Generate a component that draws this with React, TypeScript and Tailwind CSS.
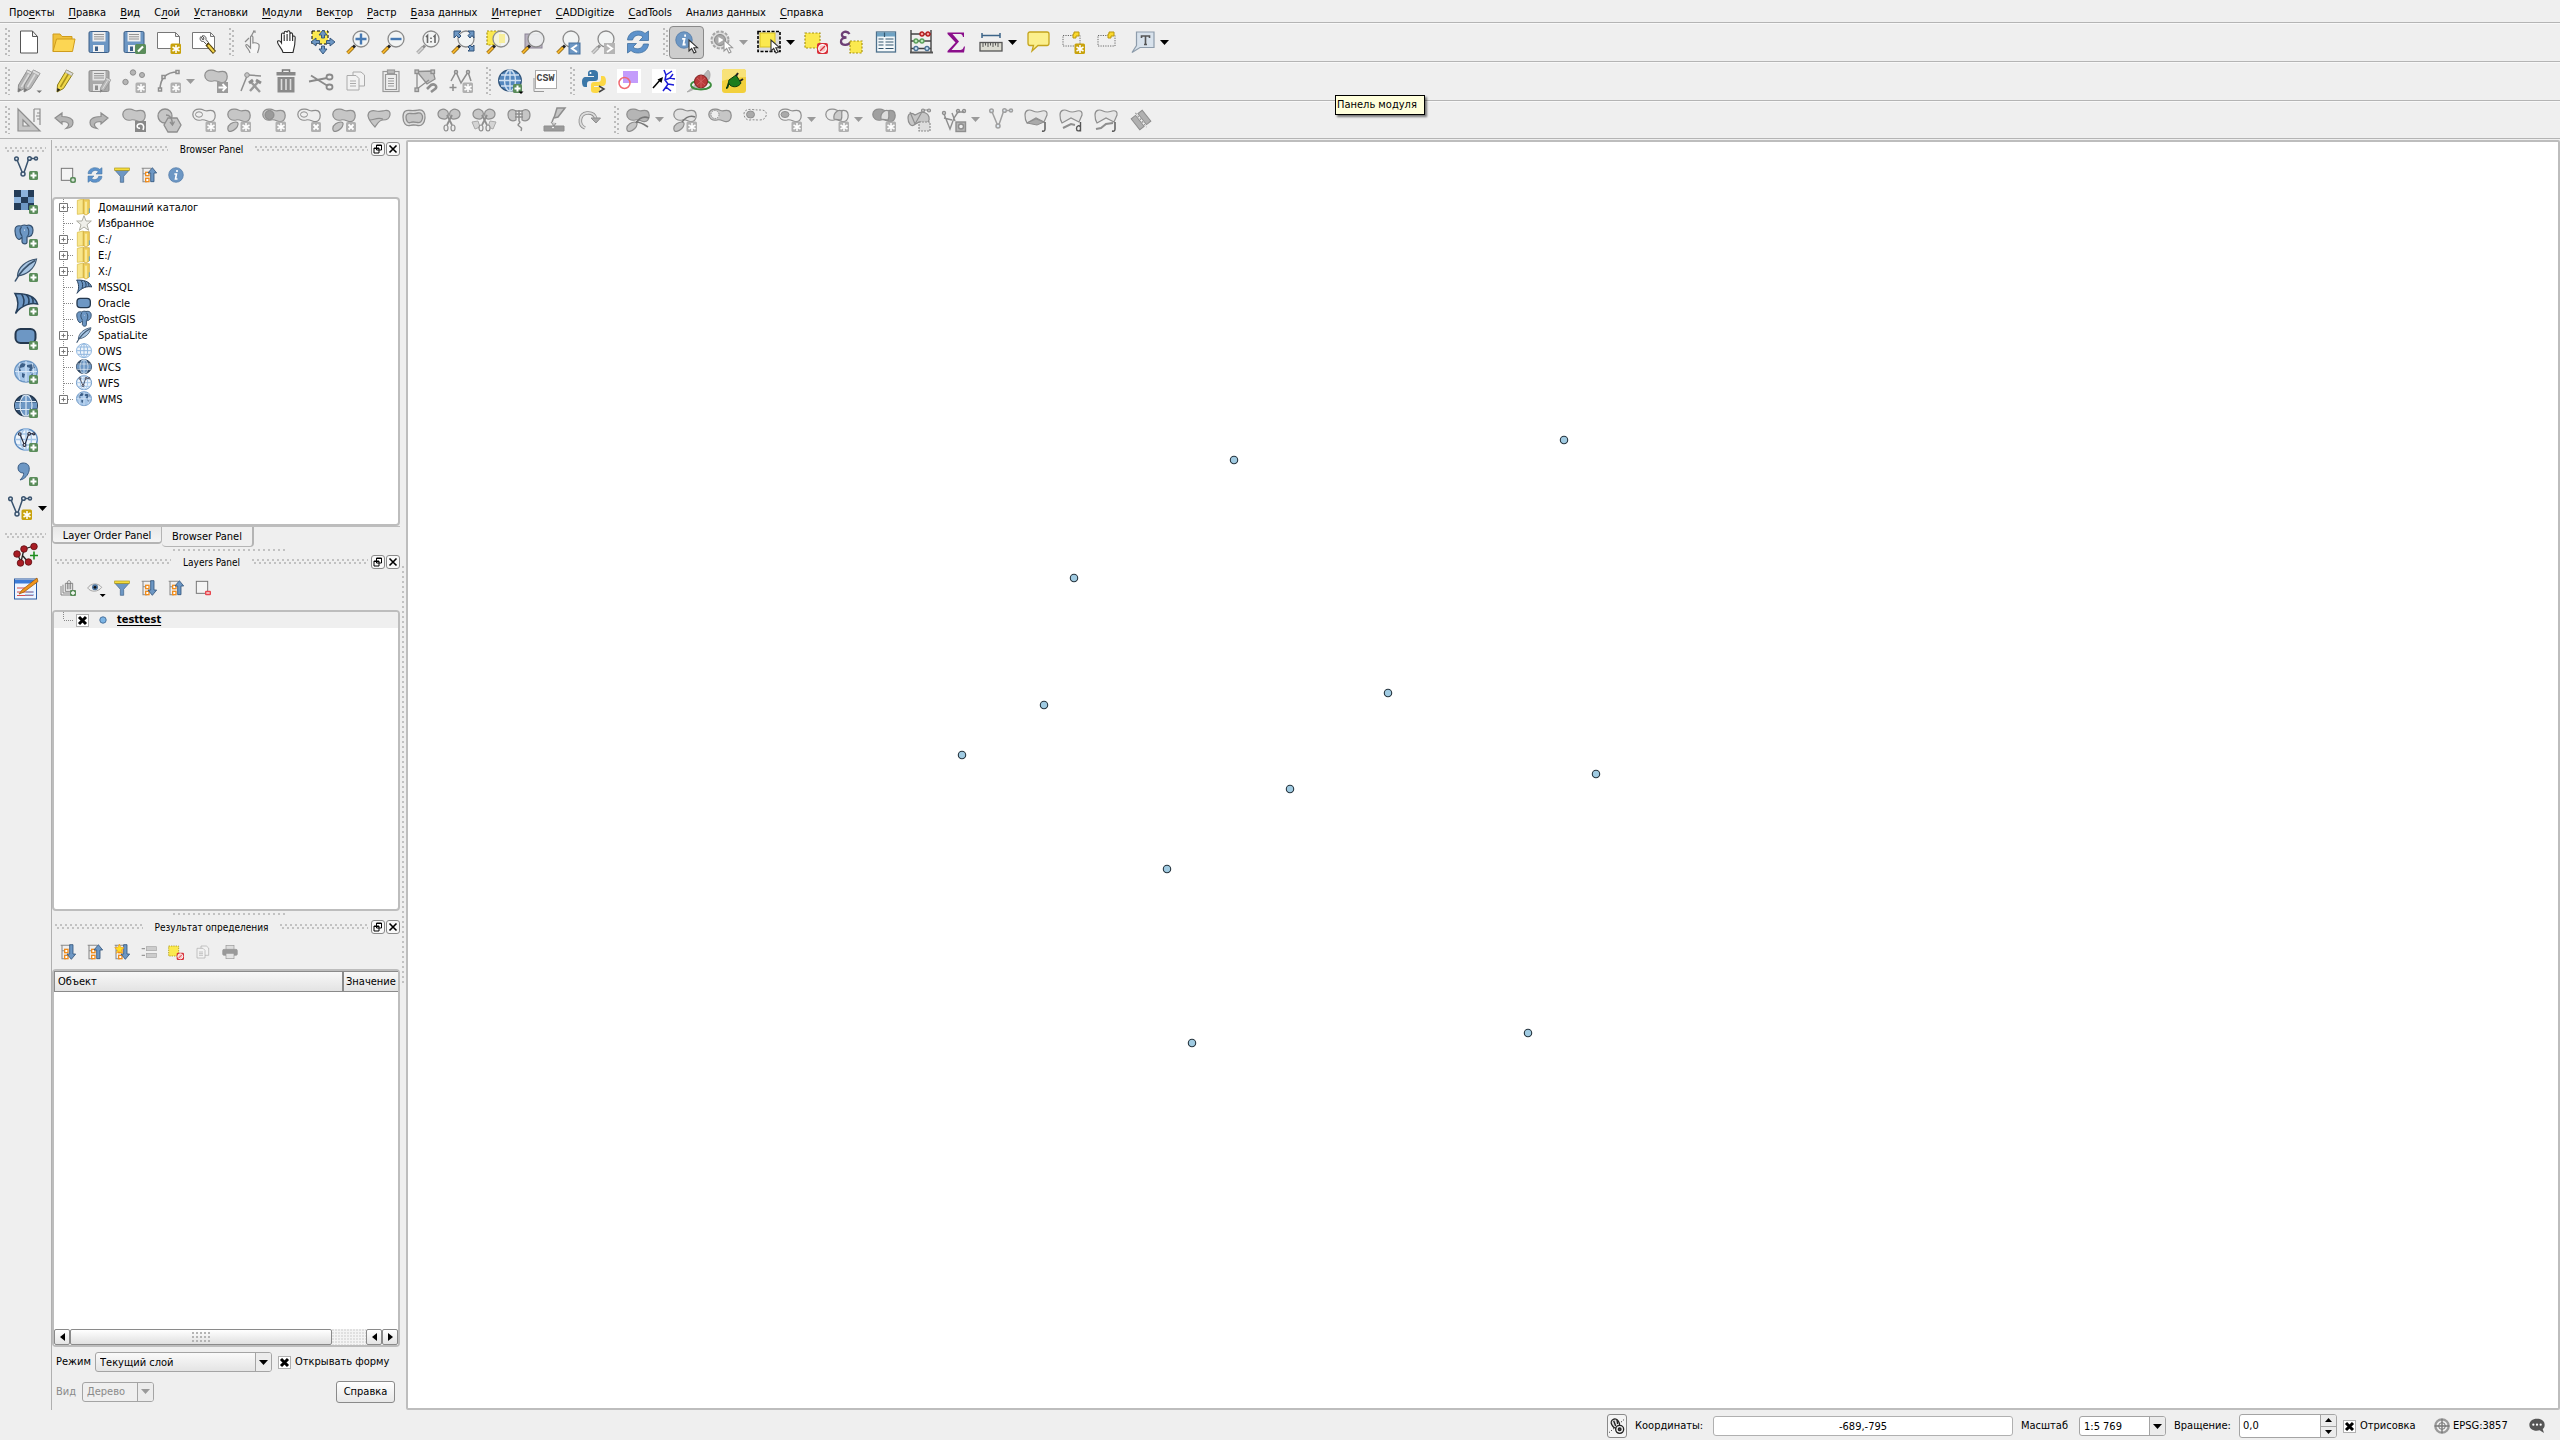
import type { ReactNode } from 'react'

const GRAY = '#8e8e8e'
const LIGHT = '#c6c6c6'
const BLUE = '#6d97c4'
const NAVY = '#3a536e'

/* ---------- icon parts, all drawn on a 24x24 grid ---------- */

const Plus = () => (
  <g>
    <rect x="15" y="15" width="9" height="9" rx="1.5" fill="#5a8c5a" />
    <path d="M19.5 16.5v6M16.5 19.5h6" stroke="#fff" strokeWidth="2" />
  </g>
)

const Star = ({ color = '#c8a20c' }: { color?: string }) => (
  <g>
    <rect x="13.5" y="13.5" width="10.500" height="10.500" rx="1.5" fill={color} stroke="none" />
    <path d="M19 15v8M15.500 17l7 4M22.500 17l-7 4" stroke="#fff" strokeWidth="1.5" />
  </g>
)

const GrayStar = () => <Star color="#b0b0b0" />

const Cross = () => (
  <g>
    <rect x="14" y="14" width="10" height="10" rx="1.5" fill="#b0b0b0" />
    <path d="M16.5 16.5l5 5M21.5 16.5l-5 5" stroke="#fff" strokeWidth="1.8" />
  </g>
)

const NoEntry = () => (
  <g>
    <rect x="13" y="13" width="11" height="11" rx="2" fill="#d8303a" />
    <circle cx="18.5" cy="18.5" r="3.8" fill="#f6c6c6" stroke="#fff" strokeWidth="1.3" />
    <path d="M16 21l5-5" stroke="#d8303a" strokeWidth="1.3" />
  </g>
)

const Blob = ({ fill = LIGHT }: { fill?: string }) => (
  <path
    d="M.8 6.5C.8 2.5 4 .8 8 1.2c4 .4 5 2.200 8 1.500 4-1 7 0 7.200 4.500.2 4-2 7.300-6.200 6.300-3-.9-5-2.500-8-1.500-4.500 1-8.200-1.500-8.200-5.500z"
    fill={fill}
    stroke={GRAY}
    strokeWidth="1.2"
  />
)

const Hole = () => <ellipse cx="7" cy="6.5" rx="3.5" ry="2.7" fill="#efefef" stroke={GRAY} />

const Petal = () => (
  <path d="M.8 20.5c0-4 5-6.500 8-6.500 3.500 0 2.500 4 0 6.500s-8 5-8 0z" fill={LIGHT} stroke={GRAY} strokeWidth="1.2" />
)

const Lens = ({ gray = false, children }: { gray?: boolean; children?: ReactNode }) => (
  <g>
    <path d="M9 15.5L6.5 18" stroke={gray ? GRAY : '#222'} strokeWidth="3" />
    <path d="M7 17.5L1.5 23" stroke={gray ? '#9a9a9a' : '#8a6414'} strokeWidth="3.6" />
    <path d="M7 17.5L1.5 23" stroke={gray ? '#d0d0d0' : '#f5b52a'} strokeWidth="2" />
    <circle cx="15" cy="9" r="8" fill="#f2f4f5" fillOpacity="0.85" stroke="#8b8b8b" strokeWidth="1.3" />
    {children}
  </g>
)

const Pointer = ({ gray = false }: { gray?: boolean }) => (
  <path d="M14 10v11l2.700-2.500 2.300 4.500 2-1-2.200-4.300h3.700z" fill="#fff" stroke={gray ? '#999' : '#333'} strokeWidth="1.1" />
)

const Floppy = ({ gray = false }: { gray?: boolean }) => (
  <g>
    <rect x="2" y="1.5" width="20" height="21" rx="1.5" fill={gray ? '#a9a9a9' : BLUE} stroke={gray ? GRAY : '#3d5f86'} />
    <rect x="5.5" y="2" width="13" height="9.5" fill={gray ? '#e4e4e4' : '#eee'} />
    <path d="M7 4.5h10M7 6.8h10M7 9h10" stroke="#888" strokeWidth=".9" />
    <rect x="6" y="15" width="11" height="7" fill={gray ? '#e4e4e4' : '#f2f2f2'} />
    <rect x="8" y="16.5" width="3" height="4.5" fill={gray ? GRAY : '#3d5f86'} />
  </g>
)

const Globe = ({ fill, line, rim = line }: { fill: string; line: string; rim?: string }) => (
  <g fill="none" stroke={line} strokeWidth="1.4">
    <ellipse cx="12" cy="11.5" rx="11.3" ry="10.5" fill={fill} stroke={rim} />
    <ellipse cx="12" cy="11.5" rx="5.5" ry="10.5" />
    <path d="M1 11.5h22M3 6h18M3 17h18M12 1v21" />
  </g>
)

const WcsGlobe = () => (
  <g fill="none">
    <ellipse cx="12" cy="11.5" rx="11.3" ry="10.5" fill="#2f4c6e" stroke="#24384f" strokeWidth="1.4" />
    <path d="M1 8.500h22v6H1zM8 1.500h8v20H8z" fill="#6d97c4" />
    <ellipse cx="12" cy="11.5" rx="6" ry="10.5" stroke="#dbe8f5" strokeWidth="1.2" />
    <path d="M2 7.500h20M2 15.500h20M12 1v21" stroke="#dbe8f5" strokeWidth="1.2" />
  </g>
)

const Nodes = ({ color = NAVY }: { color?: string }) => (
  <g fill="#dfe8f0" stroke={color} strokeWidth="1.5">
    <path d="M3.3 4.5L8.500 17M10 16.5l4.5-13M17 2.5h4" fill="none" />
    <circle cx="2.5" cy="2.8" r="1.8" />
    <circle cx="9" cy="18" r="2" />
    <circle cx="15.5" cy="2.5" r="1.8" />
    <circle cx="22" cy="2.5" r="1.5" />
  </g>
)

const Elephant = () => (
  <g stroke="#34506f" strokeWidth="1.2" fill={BLUE}>
    <path d="M7 2C3 1 .5 3 1 7c.3 4 2 8 4 8.5 1.500.2 2-2 3-2.500v5c1 2.500 5 2.500 5 0v-5c3 0 6-2 6-7 0-4-3-5.500-6.500-4.500C11 .7 9 1 7 2z" />
    <path d="M7.500 3C5.500 5 5.500 9 8 12M13 3c2 2 2.500 6 .5 9.500" fill="none" />
    <circle cx="10.5" cy="6" r=".6" fill="#fff" stroke="none" />
  </g>
)

const Feather = () => (
  <g>
    <path d="M22.5 1C12 2.500 4 9 3.500 18c8-1 17-6 19-17z" fill="#a9c6e3" stroke={NAVY} strokeWidth="1.2" />
    <path d="M21 2.500C13 7 6 14 1 23.500" stroke={NAVY} strokeWidth="1.6" fill="none" />
  </g>
)

const Sail = () => (
  <g stroke="#27405c" strokeWidth="1.5" fill={BLUE}>
    <path d="M1 1.5c8 0 20 1 22.500 10.500-5-1.500-15 0-22 9.500C5 15 4.500 7 1 1.5z" />
    <path d="M7.5 2c3 4 3 8 1.500 12M12.5 3c3 3 3 6 2 9M17.5 5c1.500 2 2 4 1.500 6" fill="none" />
  </g>
)

const Capsule = () => <rect x="1.5" y="3" width="20" height="14" rx="5" fill={BLUE} stroke="#24384f" strokeWidth="2" />

const Land = () => (
  <g>
    <ellipse cx="12" cy="11.5" rx="11.3" ry="10.5" fill="#a6c6e8" stroke={BLUE} strokeWidth="1.4" />
    <path d="M4 7l4-4 4 1-2 3-4 1 1 3-2 1zM13 5l6-1 2 4-3 1-1 4-2-3 1-2-3-1zM8 13l3 1-1 4-2-1zM17 14l3-1-1 4z" fill="#3c5f88" />
    <path d="M1 11.5h22M12 1v21M6 3c-2 6-2 11 0 17M18 3c2 6 2 11 0 17" stroke="#dceaf8" strokeWidth=".9" fill="none" />
  </g>
)

const TreeArrow = ({ up = false, star = false }: { up?: boolean; star?: boolean }) => (
  <g>
    <path d="M1 2h14M3 2v20h6M3 10h6" stroke="#8a8a8a" strokeWidth="1.6" fill="none" />
    <rect x="7" y="8" width="5" height="5" fill="#fff" stroke="#f08c1c" strokeWidth="2" />
    <rect x="7" y="17" width="5" height="5" fill="#fff" stroke="#f08c1c" strokeWidth="2" />
    <path d={up ? 'M17 1l6.500 8h-4v13h-5V9h-4z' : 'M17 23l6.500-8h-4V1h-5v14h-4z'} fill={BLUE} stroke="#2f5078" strokeWidth="1.2" />
    {star && <path d="M8 0l2 5 5 .5-4 3.500 1.500 5L8 11l-4.500 3L5 9 1 5.500 6 5z" fill="#ffdf1c" stroke="#f09c1c" />}
  </g>
)

const Info = () => (
  <g>
    <circle cx="12" cy="12" r="11" fill={BLUE} stroke="#4d77a6" />
    <path d="M13.5 4.5v3M9.5 10.5h3.200l-1.500 7.500h3" stroke="#fff" strokeWidth="2.4" fill="none" />
  </g>
)

const Pencil = ({ gray = false }: { gray?: boolean }) => (
  <g>
    <path d="M14.5 1L21 4.500l-9.500 15L5 23l.5-7z" fill={gray ? '#b5b5b5' : '#f0d84a'} stroke={gray ? GRAY : '#8a7a18'} />
    <path d="M17.5 3l-9 15" stroke={gray ? '#ddd' : '#a8921c'} strokeWidth="1.5" />
    <path d="M5 23l.4-4 3 1.800z" fill={gray ? '#777' : '#222'} />
    <path d="M14.5 1L21 4.500l-1.500 2.300L13 3.300z" fill="#ddd" stroke="#999" strokeWidth=".6" />
  </g>
)

const Gears = () => (
  <g fill={LIGHT} stroke={GRAY} strokeWidth="1.2">
    <path d="M1 6c0-4 5-6 8-4 3 1.500 3 5 1 8-2 2-9 1-9-4zM23 6c0-4-5-6-8-4-3 1.500-3 5-1 8 2 2 9 1 9-4z" />
    <path d="M10 7l5 10M15 7l-5 10" fill="none" strokeWidth="1.8" />
    <ellipse cx="9" cy="20" rx="2" ry="3" fill="#eee" />
    <ellipse cx="16" cy="20" rx="2" ry="3" fill="#eee" />
  </g>
)

const Hand = () => (
  <path
    d="M7 22.5C6 18 1.500 15 1.500 12c0-2 2.500-1.500 4 1V4.500c0-2 2.500-2 2.700 0V2.800c0-2 2.800-2 2.900 0V2c.2-1.700 2.700-1.700 2.800.3V4c.3-1.700 2.700-1.500 2.700.5V7c.4-1.500 2.600-1.200 2.600.7 0 7-.7 10-2.200 14.800zM8.200 5v6M11.100 4v7M13.900 4v7M16.600 6v5"
    fill="#fff"
    stroke="#2a2a2a"
    strokeWidth="1.1"
  />
)

const YellowSel = ({ x = 1, y = 2, w = 15 }: { x?: number; y?: number; w?: number }) => (
  <rect x={x} y={y} width={w} height={w} fill="#fbe94f" stroke="#a89414" strokeWidth="1.2" strokeDasharray="2 1.5" />
)

const JoinShape = () => (
  <path d="M1 7c0-5 4-6 8-4s6 1 9 0c4-1 5.500 1 5 4l-3 7-8-4-9 5c-2-3-2-6-2-8z" fill="#e6e6e6" stroke={GRAY} strokeWidth="1.2" />
)

const icons: Record<string, ReactNode> = {
  new: <path d="M3.5 1h12l5 5.500V23h-17zM15.500 1v5.500h5" fill="#fff" stroke="#555" />,
  open: (
    <g stroke="#cf9c1c">
      <path d="M1 21.500V4h7l2 2.500h10V10L4 21.500z" fill="#f0c23c" />
      <path d="M1 21.500L4.500 9H23l-2.500 12.500z" fill="#fcd653" />
    </g>
  ),
  save: <Floppy />,
  saveAs: (
    <g>
      <Floppy />
      <rect x="13" y="14" width="11" height="10" rx="1.5" fill="#5a8c5a" />
      <path d="M16 21.500l5-5" stroke="#fff" strokeWidth="2.2" />
    </g>
  ),
  composer: (
    <g>
      <path d="M.5 2.500h18l4 4v12H.5zM18.500 2.500v4h4" fill="#fff" stroke="#777" />
      <Star />
    </g>
  ),
  manager: (
    <g>
      <path d="M.5 2.500h18l4 4v12H.5zM18.500 2.500v4h4" fill="#fff" stroke="#777" />
      <path d="M9 6.500c-2 2-.5 5.500 2.500 5l3 3 2-2-2.500-3c.5-3-2-4.500-4-3.500l2 2-1 2z" fill="#eee" stroke="#555" />
      <path d="M15 14l7.500 8.500" stroke="#55420e" strokeWidth="4.2" />
      <path d="M16 15l6 7" stroke="#f3d44a" strokeWidth="2.2" />
    </g>
  ),
  touch: (
    <path
      d="M9 23c-.5-3-2-3.500-4-7-.7-1.500 1-2 2.500 0L9.500 18V7c0-1.500 2.300-1.500 2.400 0v6c2-.6 5 0 6 1.500.6 2 0 5-1.400 8.500M10 6.500L13 1M4 12l4-4M12 1h2v2"
      fill="#f6f6f6"
      stroke="#8a8a8a"
      strokeWidth="1.2"
    />
  ),
  pan: <Hand />,
  panSel: (
    <g>
      <rect x="1" y="1" width="16" height="13" fill="#fbe94f" stroke="#000" strokeDasharray="3 2" />
      <path
        d="M12 0l4 5h-2.500v3h-3V5H8zM12 24l4-5h-2.500v-3h-3v3H8zM0 12l5-4v2.500h3.500v3H5V16zM24 12l-5-4v2.500h-3.500v3H19V16z"
        fill={BLUE}
        stroke="#2f5078"
        strokeWidth=".9"
      />
    </g>
  ),
  zoomIn: (
    <Lens>
      <path d="M15 3.500v11M9.500 9h11" stroke="#4679b3" strokeWidth="2.4" />
    </Lens>
  ),
  zoomOut: (
    <Lens>
      <path d="M9.500 9h11" stroke="#4679b3" strokeWidth="2.4" />
    </Lens>
  ),
  zoomNative: (
    <Lens gray>
      <path d="M10 7l1.500-1.500V13M17.500 7L19 5.500V13M15 7.500V9M15 11v1.500" stroke="#666" strokeWidth="1.6" fill="none" />
    </Lens>
  ),
  zoomFull: (
    <g>
      <Lens />
      <path
        d="M3 1h7L7.500 3.500 10 6 8 8 5.500 5.500 3 8zM23 1h-6l2 2.300-2 2.400L19 8l2-2.500 2 2.500zM23 21v-6l-2 2-2-2-2 2 2 2-2 2z"
        fill={BLUE}
        stroke="#2f5078"
      />
    </g>
  ),
  zoomSel: (
    <g>
      <YellowSel y={1} w={14} />
      <Lens />
      <rect x="13" y="4" width="6" height="9" fill="#f7ee9c" />
    </g>
  ),
  zoomLayer: (
    <g>
      <rect x="4" y="4" width="17" height="14" fill="#b9b2c0" stroke="#8b8396" />
      <Lens />
    </g>
  ),
  zoomLast: (
    <g>
      <Lens />
      <rect x="13" y="13" width="11" height="11" fill={BLUE} stroke="#46709e" />
      <path d="M21 15l-5 3.500 5 3.500" stroke="#fff" strokeWidth="2" fill="none" />
    </g>
  ),
  zoomNext: (
    <g>
      <Lens gray />
      <rect x="13" y="13" width="11" height="11" fill="#b5b5b5" />
      <path d="M16 15l5 3.500-5 3.500" stroke="#fff" strokeWidth="2" fill="none" />
    </g>
  ),
  refresh: (
    <g fill="#5d92cb" stroke="#41719f" strokeWidth=".8">
      <path d="M1.500 10C2 4 7 .8 12.500 1c3 .1 5 1 6.500 2.500L22.500 1v9.500h-9L17 7c-3-3-9-2.500-10.500 3z" />
      <path d="M22.500 14c-.5 6-5.500 9.200-11 9-3-.1-5-1-6.500-2.500L1.500 23v-9.500h9L7 17c3 3 9 2.500 10.500-3z" />
    </g>
  ),
  identify: (
    <g>
      <g transform="translate(0 1) scale(.75)">
        <Info />
      </g>
      <Pointer />
    </g>
  ),
  action: (
    <g>
      <circle cx="10" cy="10" r="8.5" fill="#ddd" stroke="#a5a5a5" strokeWidth="2" strokeDasharray="3 1.5" />
      <circle cx="10" cy="10" r="5.5" fill="#aaa" stroke="#888" />
      <path d="M8.500 7l5 3-5 3z" fill="#fff" />
      <Pointer gray />
    </g>
  ),
  select: (
    <g>
      <rect x="1" y="1.5" width="22" height="20" fill="#dcdcdc" stroke="#000" strokeWidth="1.6" strokeDasharray="3 1.5" />
      <rect x="3" y="3" width="15" height="14" fill="#fbe94f" stroke="#d8c020" />
      <Pointer />
    </g>
  ),
  deselect: (
    <g>
      <YellowSel y={3} />
      <NoEntry />
    </g>
  ),
  expression: (
    <g>
      <path d="M10.5 4C8 0 2 2 3 5.500c.5 2 3 2 4.500 2-3 0-6 1.500-5.500 4.500.6 4 8 3.500 9.500 0" stroke="#6d3f75" strokeWidth="2.3" fill="none" />
      <YellowSel x={11} y={11} w={12} />
    </g>
  ),
  table: (
    <g>
      <rect x="2.5" y="2" width="19" height="20" fill="#f4f8fa" stroke="#4d708c" strokeWidth="1.3" />
      <rect x="3" y="2.5" width="18" height="4" fill="#6fa3c4" />
      <path d="M4.500 9h5M11.500 9h8M4.500 12h5M11.500 12h8M4.500 15h5M11.500 15h8M4.500 18.500h5M11.500 18.500h8M10.500 2.500V7" stroke="#33566f" strokeWidth="1.2" />
    </g>
  ),
  abacus: (
    <g>
      <path d="M2 0v23M22 0v23M2 4h20M2 11h20M2 18.500h20" stroke="#444" strokeWidth="1.4" />
      <path d="M1 22.500h23" stroke="#555" strokeWidth="2" />
      <g strokeWidth="1.3">
        <path d="M11 4a2 2 0 104 0 2 2 0 10-4 0M17 4a2 2 0 104 0 2 2 0 10-4 0" fill="#f4a0a0" stroke="#b81c1c" />
        <path d="M5 11a2 2 0 104 0 2 2 0 10-4 0M11 11a2 2 0 104 0 2 2 0 10-4 0" fill="#b8e8b8" stroke="#5ba05b" />
        <path d="M5 18.500a2 2 0 104 0 2 2 0 10-4 0M16 18.500a2 2 0 104 0 2 2 0 10-4 0" fill="#cfe2f4" stroke="#4a7296" />
      </g>
    </g>
  ),
  sigma: <path d="M3.500 2.500H20V7h-1c-.5-2.500-1.500-3-4-3H8.500l6.500 7.500L7.500 20h8c3 0 3.500-1 4.500-3.500h1l-1 6H3.500V21l8-8.500-8-8.500z" fill="#8b0f8b" />,
  ruler: (
    <g>
      <path d="M3 5.500h18M3 3v5M21 3v5" stroke="#3c6488" strokeWidth="1.5" />
      <rect x="1" y="12.5" width="22" height="8.5" fill="#dcdcd2" stroke="#555" strokeWidth="1.3" />
      <path d="M4 13v4M6.500 13v2.500M9 13v4M11.500 13v2.500M14 13v4M16.500 13v2.500M19 13v4" stroke="#555" />
    </g>
  ),
  tips: (
    <path
      d="M4 2h17c1.500 0 2 1 2 2v9c0 1.500-.5 2.500-2 2.500h-9L6 21l1.500-5.500H4c-1.500 0-2-1-2-2.500V4c0-1 .5-2 2-2z"
      fill="#fbef8c"
      stroke="#c4a41c"
      strokeWidth="1.3"
    />
  ),
  bookmarkNew: (
    <g>
      <path d="M2 5.500h17V16H2z" fill="none" stroke="#666" strokeDasharray="1.2 1.2" />
      <path d="M13 2h5v4h-3v2h-3V4h1z" fill="#fbd92c" stroke="#b8960c" />
      <Star />
    </g>
  ),
  bookmarks: (
    <g>
      <path d="M2 5.500h17V16H2z" fill="none" stroke="#666" strokeDasharray="1.2 1.2" />
      <path d="M13 2h5v4h-3v2h-3V4h1z" fill="#fbd92c" stroke="#b8960c" />
    </g>
  ),
  annotation: (
    <g>
      <path d="M5.500 2H23v15.500H9L1 22.500l4.500-7z" fill="#d8e2ec" stroke="#8d9cab" strokeWidth="1.2" />
      <path d="M10.500 8V6h8v2M14.500 6v8.500M13 14.500h3" stroke="#555" strokeWidth="1.6" fill="none" />
    </g>
  ),

  edits: (
    <g>
      <g transform="translate(-4 0)"><Pencil gray /></g>
      <g transform="translate(2 0)"><Pencil gray /></g>
      <path d="M19.500 21.500h5.500L22.300 24z" fill="#777" />
    </g>
  ),
  pencil: <Pencil />,
  saveEdits: (
    <g>
      <Floppy gray />
      <g transform="translate(10 8) scale(.66)"><Pencil gray /></g>
    </g>
  ),
  points: (
    <g fill="#b5b5b5" stroke={GRAY}>
      <circle cx="11" cy="3.5" r="2.7" />
      <circle cx="20" cy="6" r="2.5" />
      <circle cx="3.5" cy="13" r="2.7" />
      <GrayStar />
    </g>
  ),
  curve: (
    <g stroke={GRAY} strokeWidth="1.5" fill="#eee">
      <path d="M3 21C3 10 8 3 21 3" fill="none" />
      <rect x="1.5" y="19" width="3" height="3" />
      <rect x="5" y="6.5" width="3" height="3" />
      <rect x="19" y="1.5" width="3" height="3" />
      <GrayStar />
    </g>
  ),
  move: (
    <g>
      <Blob />
      <rect x="13" y="13" width="11" height="11" fill="#9a9a9a" />
      <path d="M14.500 18.500h7M18.500 15l3.500 3.500-3.500 3.500" stroke="#fff" strokeWidth="1.8" fill="none" />
    </g>
  ),
  nodeTool: (
    <g stroke={GRAY} fill={LIGHT}>
      <path d="M2 22L8 7M9 6l13 1" strokeWidth="1.5" />
      <circle cx="8" cy="6" r="2.3" />
      <path d="M11 22l9-10M12 13l9 10" strokeWidth="2.4" stroke="#9a9a9a" />
      <path d="M10 14l4-3M17 11l5 3" strokeWidth="3" />
    </g>
  ),
  trash: (
    <g>
      <path d="M8.500 3.500V1h7v2.500" fill="none" stroke="#777" strokeWidth="1.5" />
      <rect x="2.5" y="3" width="19" height="3.5" fill="#888" />
      <path d="M3.500 8h17v15.500h-17z" fill="#8a8a8a" />
      <path d="M7.500 10v11M12 10v11M16.500 10v11" stroke="#ddd" strokeWidth="1.6" />
    </g>
  ),
  cut: (
    <g stroke="#8a8a8a" fill="none" strokeWidth="1.8">
      <path d="M0 12.500l18-3.500M2 6.500l16 10" />
      <ellipse cx="20.5" cy="8" rx="3" ry="2.5" />
      <ellipse cx="20.5" cy="18" rx="3" ry="2.5" />
    </g>
  ),
  copy: (
    <g fill="#f2f2f2" stroke="#aaa">
      <path d="M9 3h8l3.500 3v11H9z" />
      <path d="M3 6.500h9l3 3V21H3zM6 12h6M6 14.500h6M6 17h6" />
    </g>
  ),
  paste: (
    <g fill="#eee" stroke="#999" strokeWidth="1.2">
      <rect x="4" y="2.5" width="16" height="20" />
      <path d="M6.500 5.500h11v15h-11zM9 9.500h6M9 12h6M9 14.500h6M9 17h6" />
      <rect x="8.5" y="1" width="7" height="3.5" fill="#bbb" />
    </g>
  ),
  snap: (
    <g stroke={GRAY} fill={LIGHT} strokeWidth="1.3">
      <path d="M3 2.500l16-.500 2 8-8 5z" />
      <path d="M3 3v17l12-9" fill="none" />
      <rect x="1" y="1" width="3.5" height="3.5" /><rect x="17" y="1" width="3.5" height="3.5" /><rect x="1" y="19" width="3.5" height="3.5" />
      <path d="M13 20l4-4c4-2 7 2 4 4l-4 3" fill="none" strokeWidth="2.6" />
    </g>
  ),
  vertexAdd: (
    <g stroke={GRAY} fill="none" strokeWidth="1.5">
      <path d="M2 12L7 3l5 11 7-11 3 9M4 15v7M.5 18.500h7" />
      <circle cx="7" cy="3" r="1.5" fill="#eee" /><circle cx="19" cy="3" r="1.5" fill="#eee" />
      <GrayStar />
    </g>
  ),
  metasearch: (
    <g>
      <Globe fill="#5487be" line="#cfe0f2" rim="#34587e" />
      <Plus />
      <path d="M20.500 22.500h5L23 25z" fill="#000" />
    </g>
  ),
  csw: (
    <g>
      <path d="M1 9v13.500h10" fill="none" stroke="#999" />
      <rect x="2.5" y="1.5" width="21" height="18" fill="#fff" stroke="#aaa" />
    </g>
  ),
  python: (
    <g>
      <path d="M11 1C6 1 6 3 6 5v2h6v1H4c-3 0-4 2-4 5s1 5 3 5h2v-3c0-2 1-3 3-3h5c2 0 3-1 3-3V5c0-3-2-4-5-4z" fill="#3b77a8" />
      <path d="M13 24c5 0 5-2 5-4v-2h-6v-1h8c3 0 4-2 4-5s-1-5-3-5h-2v3c0 2-1 3-3 3h-4c-2 0-3 1-3 3v5c0 2 1 3 4 3z" fill="#fcd846" />
      <circle cx="8.5" cy="4" r="1" fill="#fff" />
      <path d="M17 17l5 3-5 3" stroke="#444" strokeWidth="1.5" fill="none" />
    </g>
  ),
  shapes: (
    <g>
      <path d="M0 0h24v24H0z" fill="#fff" />
      <path d="M6 2h15v12H6z" fill="#c39cfb" />
      <circle cx="7.5" cy="14" r="5.5" fill="none" stroke="#f06a72" strokeWidth="1.5" />
    </g>
  ),
  river: (
    <g fill="none">
      <path d="M0 0h24v24H0z" fill="#fff" />
      <path d="M12 1l2 5-1 5 3 4-2 3 5 4M14 6l6-4M13 11l5-2 5 1M16 15l6 1M18 9l3-4M14 18l-3 4" stroke="#1c1cd8" strokeWidth="1.5" />
      <path d="M1 19l8-9" stroke="#000" strokeWidth="1.5" />
      <path d="M11 8l-1.500 6-4-3.500z" fill="#000" />
    </g>
  ),
  orbit: (
    <g>
      <path d="M21 1c4 3 2 11-3 14L2 22.500l-2 .5C8 17 13 10 21 1z" fill="#b8b8b8" stroke="#999" strokeWidth=".6" />
      <ellipse cx="14" cy="16" rx="10" ry="4.5" fill="none" stroke="#3c8c3c" strokeWidth="1.7" />
      <circle cx="14" cy="12.5" r="6.5" fill="#b83a3a" stroke="#7c1c1c" />
      <path d="M10 9l8 7M18 9l-8 7M14 6v13" stroke="#d86a6a" strokeWidth=".7" />
      <path d="M4.500 17.500c3 4 16 4 19-.5" fill="none" stroke="#3c8c3c" strokeWidth="1.7" />
    </g>
  ),
  plugin: (
    <g>
      <rect width="24" height="24" rx="3" fill="#f2d03c" />
      <path d="M0 12V3a3 3 0 013-3h18a3 3 0 013 3v5C17 8 9 9 0 12z" fill="#f8e278" />
      <path d="M4 19c3 0 1-5 4-6" stroke="#0c3c0c" strokeWidth="2" fill="none" />
      <path d="M7 11l7-5 5 8c-2 4-8 5-11 2-1.500-1.500-2-3-1-5z" fill="#1c7c1c" stroke="#0c3c0c" />
      <path d="M14 7l2-3M18 12l3-2" stroke="#222" strokeWidth="2" />
    </g>
  ),

  cad: (
    <g fill={LIGHT} stroke={GRAY} strokeWidth="1.2">
      <path d="M1 1v22h22zM6 12v6h6z" fillRule="evenodd" />
      <path d="M17 1h6v16M20 5h3M19 8h4M20 11h3M17 1v13" fill="none" />
    </g>
  ),
  undo: <path d="M3 10l7-5v3.500c8 0 11 2.500 11 6s-3 5.500-7 6c2-1.500 3-3 2.500-4.500s-3-2.500-6.500-2.500V16z" fill="#b5b5b5" stroke={GRAY} strokeWidth="1.2" />,
  redo: <path d="M21 10l-7-5v3.500c-8 0-11 2.500-11 6s3 5.500 7 6c-2-1.500-3-3-2.500-4.500s3-2.500 6.500-2.500V16z" fill="#b5b5b5" stroke={GRAY} strokeWidth="1.2" />,
  rotate: (
    <g>
      <Blob />
      <rect x="13" y="13" width="11" height="11" fill="#888" />
      <path d="M21 22c2-5-1-7-4-6s-2 5 1 4" stroke="#fff" strokeWidth="1.5" fill="none" />
    </g>
  ),
  simplify: (
    <g fill={LIGHT} stroke={GRAY} strokeWidth="1.3">
      <circle cx="8" cy="8" r="7" />
      <path d="M11 10h9l4 7-4 7h-9l-4-7z" />
      <path d="M9 7c4 0 6 3 6.500 9M13 14l2.500 3 2-3.500" fill="none" />
    </g>
  ),
  ring: <g><Blob fill="#eee" /><Hole /><GrayStar /></g>,
  part: <g><Blob /><Petal /><GrayStar /></g>,
  fillRing: <g><Blob /><circle cx="7.5" cy="7" r="4.5" fill="#9a9a9a" stroke="#888" /><GrayStar /></g>,
  delRing: <g><Blob fill="#eee" /><Hole /><Cross /></g>,
  delPart: <g><Blob /><Petal /><Cross /></g>,
  reshape: <path d="M1 8c0-5 4-6 8-5s6 0 9-.5C22 2 23.500 4 23 7s-3 5-7 5c-4 0-5 3-8 7-2-2-6-6-7-11zM3 12c4 0 7-3 13-1" fill={LIGHT} stroke={GRAY} strokeWidth="1.2" />,
  offset: (
    <g fill="#ddd" stroke={GRAY} strokeWidth="1.3">
      <path d="M1 9c0-6 3-7 7-6.500s6 0 9-.5c4-.5 6.500 3 6 8s-3 8-7 7.500c-4-.5-5-1-8 0C4 18.500 1 15 1 9z" />
      <path d="M4 9c0-3 2-4 5-3.500s5 0 7-.5c3-.5 5 2 4.500 5s-2 5-5 4.500-5-1-7 0C6 15.500 4 13 4 9z" fill={LIGHT} />
    </g>
  ),
  split: <Gears />,
  splitParts: (
    <g>
      <path d="M0 14l6-1 2 6-5 2zM24 14l-6-1-2 6 5 2z" fill="#d4d4d4" stroke="#aaa" />
      <Gears />
    </g>
  ),
  merge: (
    <g fill={LIGHT} stroke={GRAY} strokeWidth="1.2">
      <path d="M1 7c0-5 4-7 8-4v9C5 14 1 12 1 7zM23 7c0-5-4-7-8-4v9c4 2 8 0 8-5z" />
      <path d="M8 3h8M8 6h8M8 9h8M12 2v11c3 2-3 3 0 5s3 2 2 5" fill="none" strokeWidth="1.5" />
    </g>
  ),
  brush: (
    <g fill={LIGHT} stroke={GRAY}>
      <path d="M15 0h8l-7 9-4 1zM12 9l-2 5" strokeWidth="1.5" />
      <path d="M2 18h20v5H2z" fill="#9a9a9a" />
      <path d="M9 14l3 4 2-3" />
      <circle cx="11" cy="19.5" r="1.5" fill="#eee" />
    </g>
  ),
  rotSymbol: (
    <g fill="none" stroke={GRAY}>
      <path d="M8 20C1 17 2 6 10 5c5-.5 8 2 9 6" strokeWidth="3.5" />
      <path d="M8 20C1 17 2 6 10 5c5-.5 8 2 9 6" strokeWidth="1.8" stroke="#ddd" />
      <path d="M14 10h9.500L19 15z" fill="#aaa" />
    </g>
  ),
  cutPoly: <g><Blob fill="#b5b5b5" /><Petal /><path d="M10 15c4-6 8-7 13-5M10 14c5 0 9 3 12 5" stroke="#777" fill="none" strokeWidth="1.6" /></g>,
  cutPolyNew: <g><Blob fill="#e2e2e2" /><Petal /><path d="M9 14c4-5 8-7 13-5" stroke="#777" fill="none" strokeWidth="1.6" /><GrayStar /></g>,
  ringFill: <g><Blob /><circle cx="7" cy="6.5" r="4" fill="#eee" stroke={GRAY} strokeDasharray="1.5 1" /></g>,
  ringDash: (
    <g>
      <path d="M1 6c0-4 4-5 8-4.500 4 .5 6 .5 9 .5 5 0 6 3 5 6s-3 4-7 4-6-.5-9 0-6-2-6-6z" fill="#eee" stroke={GRAY} strokeDasharray="2 1.5" />
      <ellipse cx="7.5" cy="6.5" rx="4" ry="3.5" fill="#aaa" stroke={GRAY} />
    </g>
  ),
  ringNew: <g><Blob fill="#eee" /><ellipse cx="7" cy="6.5" rx="4" ry="3" fill="#aaa" stroke={GRAY} /><GrayStar /></g>,
  overlap: (
    <g>
      <Blob fill="#ececec" />
      <path d="M9 11C8 5 13 1 17 3c-1 3 1 5-1 9z" fill="#ccc" stroke={GRAY} strokeWidth="1.2" />
      <GrayStar />
    </g>
  ),
  overlapDark: (
    <g>
      <Blob fill="#a0a0a0" />
      <path d="M9 11C8 5 13 1 17 3c-1 3 1 5-1 9z" fill="#ddd" stroke={GRAY} strokeWidth="1.2" />
      <GrayStar />
    </g>
  ),
  vertexPoly: (
    <g stroke={GRAY} fill={LIGHT} strokeWidth="1.2">
      <path d="M1 10c0-5 4-6 7-3l4-2c4-2 9 0 10 4s-2 8-6 6-6 0-9 2-6-2-6-7z" />
      <path d="M3 4l5 12 8-14h6" fill="none" />
      <rect x="12" y="14" width="11" height="9" fill="#ddd" strokeDasharray="2 1" />
      <circle cx="16" cy="2.5" r="1.5" /><circle cx="22" cy="2.5" r="1.5" />
    </g>
  ),
  vertexLock: (
    <g stroke={GRAY} fill="none" strokeWidth="1.4">
      <path d="M2 6l6 15 4-11 4-6h6M2 10l8 2M10 5l3 8" />
      <circle cx="2" cy="5" r="1.5" /><circle cx="22" cy="3" r="1.5" /><circle cx="16" cy="3" r="1.5" />
      <rect x="14" y="14" width="9.5" height="9.5" fill="#b5b5b5" />
      <circle cx="19" cy="18.5" r="2.5" fill="#eee" />
    </g>
  ),
  vertex: <Nodes color="#a0a0a0" />,
  joinJ: (
    <g>
      <JoinShape />
      <path d="M3 15l9-4 8 3-7 3z" fill="#aaa" stroke={GRAY} />
      <path d="M21 14v7c0 2-1 2.500-3 2" fill="none" stroke="#555" strokeWidth="1.4" />
    </g>
  ),
  joinD: (
    <g fill="none" stroke={GRAY} strokeWidth="1.2">
      <JoinShape />
      <path d="M4 20l8-4 4 1" strokeWidth="2" />
      <path d="M21.500 14v9.500M21.500 19c-1-2-4-1.500-4 1.500s3 3 4 1" stroke="#555" strokeWidth="1.4" />
    </g>
  ),
  joinF: (
    <g fill="none" stroke={GRAY} strokeWidth="1.2">
      <JoinShape />
      <path d="M2 21l5-1 5-4 7-1" strokeWidth="2" />
      <path d="M21 14v7c0 2-1 2.500-3 2" stroke="#555" strokeWidth="1.4" />
    </g>
  ),
  hatch: (
    <g transform="rotate(-38 12 12)" stroke={GRAY}>
      <rect x="5" y="5" width="5.5" height="14" fill="#b0b0b0" />
      <rect x="13.5" y="5" width="5.5" height="14" fill="#b0b0b0" />
      <path d="M12 3v18" strokeDasharray="2 1.5" />
    </g>
  ),

  addVector: <g><Nodes /><Plus /></g>,
  addRaster: (
    <g>
      <path d="M0 0h20v20H0z" fill={BLUE} />
      <path d="M0 0h7v7H0zM14 0h6v7h-6zM7 7h7v6H7zM0 13h7v7H0zM14 13h6v7h-6z" fill="#243c58" />
      <path d="M7 0h7v7H7zM0 7h7v6H0z" fill="#8db3dc" />
      <Plus />
    </g>
  ),
  addPostgis: <g><Elephant /><Plus /></g>,
  addSpatialite: <g><Feather /><Plus /></g>,
  addMssql: <g><Sail /><Plus /></g>,
  addOracle: <g><Capsule /><Plus /></g>,
  addWms: <g><Land /><Plus /></g>,
  addWcs: <g><WcsGlobe /><Plus /></g>,
  addWfs: <g><Globe fill="#eef5fc" line="#a6c6e8" rim="#5d8cc0" /><g transform="translate(4 4) scale(.72)"><Nodes color="#223" /></g><Plus /></g>,
  addCsv: (
    <g>
      <path d="M9 1c5 0 7 3 6 8-1 4-4 8-9 9 3-3 4-5 3.500-7C6 11 4 9 4 6s2-5 5-5z" fill={BLUE} stroke="#3d5f86" />
      <Plus />
    </g>
  ),
  newVector: <g><Nodes /><Star /></g>,
  topology: (
    <g>
      <path d="M3 10l4 9M10 6l10-3M10 6L7 19M14 19l-5-6" stroke="#222" strokeWidth="1.3" />
      <g fill="#a81c24" stroke="#5c0c10" strokeWidth=".8">
        <circle cx="20" cy="3.5" r="3.3" /><circle cx="10" cy="6" r="3.3" /><circle cx="3" cy="11" r="3.3" /><circle cx="6.5" cy="20" r="3.3" /><circle cx="14.5" cy="19" r="3.3" />
      </g>
      <path d="M20 8.500v8M16 12.500h8" stroke="#1c8c1c" strokeWidth="1.6" />
    </g>
  ),
  notes: (
    <g>
      <rect x=".5" y="2" width="22" height="20" fill="#eef5ff" stroke="#2c5ca4" />
      <path d="M1 3h21.500v3.500H1z" fill="#3c7cd8" />
      <path d="M3 11h8M3 15h16M3 18.500h16" stroke="#d84c4c" strokeWidth="1.2" />
      <path d="M23 1L8 13l-3 4 5-2L24 4.500z" fill="#f0941c" stroke="#9c5c0c" strokeWidth=".8" />
      <path d="M12 15h8M11 18h9" stroke="#6c9cdc" />
    </g>
  ),

  addItem: (
    <g>
      <rect x="2" y="2" width="17" height="18" fill="#f4f4f4" stroke="#777" strokeWidth="1.5" />
      <rect x="15" y="15" width="9" height="9" rx="3" fill="#5a8c5a" />
      <path d="M19.500 17v5M17 19.500h5" stroke="#fff" strokeWidth="1.5" />
    </g>
  ),
  funnel: (
    <g>
      <path d="M1.500 5h21l-8 9v9h-5v-9z" fill={BLUE} stroke="#3d5f86" />
      <rect x="1" y="1.5" width="22" height="3.5" fill="#f5dc3c" stroke="#a89414" />
    </g>
  ),
  collapse: <TreeArrow up />,
  expand: <TreeArrow />,
  expandNew: <TreeArrow star />,
  info: <Info />,
  group: (
    <g fill="none" stroke="#777" strokeWidth="1.3">
      <path d="M1.500 9v13.500H15M4.500 7v12.500H18M8 5h11v12H8z" />
      <path d="M11 14V4c0-4 5-4 5 0v10M13.500 14V5" />
      <g stroke="none"><Plus /></g>
    </g>
  ),
  eye: (
    <g>
      <path d="M1 12C6 4 17 4 22 11c-5 7-16 8-21 1z" fill="#eee" stroke="#999" strokeWidth="1.3" />
      <circle cx="12" cy="11" r="4.5" fill="#4a739f" />
      <circle cx="12" cy="11" r="2" fill="#111" />
      <path d="M19 21h9l-4.500 4.500z" fill="#000" />
    </g>
  ),
  remove: (
    <g>
      <rect x="2" y="2" width="17" height="18" fill="#f4f4f4" stroke="#777" strokeWidth="1.5" />
      <rect x="15" y="16" width="9" height="7" rx="2" fill="#e8464e" />
      <path d="M17 19.500h5" stroke="#fff" strokeWidth="1.8" />
    </g>
  ),
  form: (
    <g fill="#ccc" stroke="#a4a4a4">
      <path d="M1 7h5M1 17h5" strokeWidth="2" stroke="#999" />
      <rect x="8" y="4" width="15" height="6" />
      <rect x="8" y="14" width="15" height="6" />
    </g>
  ),
  print: (
    <g fill="#bbb" stroke="#999">
      <rect x="6" y="2" width="12" height="7" fill="#ddd" />
      <rect x="1" y="8" width="22" height="9" rx="2" fill="#999" />
      <rect x="6" y="14" width="12" height="8" fill="#e4e4e4" />
    </g>
  ),

  folder: (
    <g>
      <path d="M2 2l9-2v22l-9 1z" fill="#f8e68c" stroke="#d8b83c" />
      <path d="M11 1h9v20l-5 3-4-2z" fill="#f0d05c" stroke="#c8a02c" />
      <path d="M15 4v19" stroke="#fff5b4" strokeWidth="2" />
      <path d="M20 14v7" stroke="#5ca4d0" strokeWidth="1.5" />
    </g>
  ),
  star: <path d="M12 1l3 8h8l-6.500 5.500L19 23l-7-5-7 5 2.500-8.500L1 9h8z" fill="#f0f0ea" stroke="#a8a89c" strokeWidth="1.4" />,
  mssql: <Sail />,
  oracle: <g transform="translate(0 2)"><Capsule /></g>,
  postgis: <g transform="translate(0 -1) scale(1.2)"><Elephant /></g>,
  spatialite: <Feather />,
  ows: <Globe fill="#eef5fc" line="#8cb4de" />,
  wcs: <WcsGlobe />,
  wfs: <g><Globe fill="#eef5fc" line="#a6c6e8" rim="#5d8cc0" /><g transform="translate(4 3) scale(.72)"><Nodes color="#223" /></g></g>,
  wms: <Land />,

  mouse: (
    <g fill="none" stroke="#222" strokeWidth="2">
      <path d="M0 22L24 1" strokeDasharray="2 2" strokeWidth="1.2" />
      <rect x="4" y="1" width="11" height="14" rx="5.5" transform="rotate(-30 10 8)" fill="#ddd" />
      <path d="M7 4l3 8M12 3l1 6" />
      <circle cx="16" cy="17" r="6" fill="#eee" />
      <circle cx="16" cy="17" r="2" fill="#555" />
    </g>
  ),
  crs: (
    <g fill="none" stroke="#777">
      <circle cx="12" cy="12" r="10" strokeWidth="3.5" stroke="#999" />
      <circle cx="12" cy="12" r="5" strokeWidth="1.5" />
      <path d="M12 1v22M1 12h22" strokeWidth="2" />
    </g>
  ),
  log: (
    <g>
      <path d="M12 1c7 0 11.500 4 11.500 9 0 3-1 5-3 6.500l2 6-6.500-4C7 20.500.5 16.500.5 10 .5 5 5 1 12 1z" fill="#555" />
      <circle cx="6.5" cy="10" r="1.7" fill="#fff" /><circle cx="12" cy="10" r="1.7" fill="#fff" /><circle cx="17.5" cy="10" r="1.7" fill="#fff" />
    </g>
  ),
}

const Icon = ({ name, small = false }: { name: string; small?: boolean }) => (
  <svg viewBox="0 0 24 24" className={small ? 'size-4 shrink-0 overflow-visible' : 'size-6 shrink-0 overflow-visible'} aria-hidden="true">
    {icons[name]}
  </svg>
)

const Caret = ({ gray = false }: { gray?: boolean }) => (
  <svg viewBox="0 0 9 5" className="h-[5px] w-[9px] shrink-0" aria-hidden="true">
    <path d="M0 0h9L4.500 5z" fill={gray ? '#9a9a9a' : '#000'} />
  </svg>
)

/* ---------- toolbars ---------- */

const VGrip = ({ first = false }: { first?: boolean }) => (
  <div className={first ? 'flex w-[11px] shrink-0 justify-end' : 'flex w-3.5 shrink-0 justify-end'}>
    <div className="h-[28px] w-[6px] bg-[radial-gradient(circle_at_1px_1px,#bcbcbc_1px,transparent_1px),radial-gradient(circle_at_4px_3px,#bcbcbc_1px,transparent_1px)] bg-[length:6px_5px]" />
  </div>
)

const HDots = () => (
  <div className="h-[6px] flex-1 bg-[radial-gradient(circle_at_1px_1px,#c2c2c2_1px,transparent_1px),radial-gradient(circle_at_3px_4px,#c2c2c2_1px,transparent_1px)] bg-[length:5px_6px]" />
)

// '|' is a grip, 'v' an enabled drop-down arrow, '-v' a disabled one
const Toolbar = ({ label, items, className }: { label: string; items: string[]; className: string }) => (
  <div role="toolbar" aria-label={label} className={`flex items-center border-b border-[#b4b4b4] shadow-[inset_0_1px_0_#f8f8f8] ${className}`}>
    <VGrip first />
    {items.map((item, i) => {
      if (item === '|') return <VGrip key={i} />
      if (item === 'v' || item === '-v') {
        return (
          <button key={i} aria-label="menu" className="flex h-8 w-3 shrink-0 items-center">
            <Caret gray={item === '-v'} />
          </button>
        )
      }
      return (
        <button
          key={i}
          aria-label={item}
          className={
            item === 'identify'
              ? 'flex h-[33px] w-[35px] shrink-0 items-center justify-center rounded-sm border border-[#8a8a8a] bg-[#cdcdcd]'
              : 'flex h-[33px] w-[35px] shrink-0 items-center justify-center'
          }
        >
          {item === 'csw' ? (
            <span className="grid place-items-center *:[grid-area:1/1]">
              <Icon name="csw" />
              <span className="pb-1 pl-0.5 font-['Liberation_Mono',monospace] text-[10px] font-bold text-[#444]">CSW</span>
            </span>
          ) : (
            <Icon name={item} />
          )}
        </button>
      )
    })}
  </div>
)

const fileBar = [
  'new', 'open', 'save', 'saveAs', 'composer', 'manager', '|',
  'touch', 'pan', 'panSel', 'zoomIn', 'zoomOut', 'zoomNative', 'zoomFull', 'zoomSel', 'zoomLayer', 'zoomLast', 'zoomNext', 'refresh', '|',
  'identify', 'action', '-v', 'select', 'v', 'deselect', 'expression', 'table', 'abacus', 'sigma', 'ruler', 'v',
  'tips', 'bookmarkNew', 'bookmarks', 'annotation', 'v',
]

const editBar = [
  'edits', 'pencil', 'saveEdits', 'points', 'curve', '-v', 'move', 'nodeTool', 'trash', 'cut', 'copy', 'paste', 'snap', 'vertexAdd', '|',
  'metasearch', 'csw', '|',
  'python', 'shapes', 'river', 'orbit', 'plugin',
]

const advancedBar = [
  'cad', 'undo', 'redo', 'rotate', 'simplify', 'ring', 'part', 'fillRing', 'delRing', 'delPart', 'reshape', 'offset',
  'split', 'splitParts', 'merge', 'brush', 'rotSymbol', '|',
  'cutPoly', '-v', 'cutPolyNew', 'ringFill', 'ringDash', 'ringNew', '-v', 'overlap', '-v', 'overlapDark', 'vertexPoly', 'vertexLock', '-v',
  'vertex', 'joinJ', 'joinD', 'joinF', 'hatch',
]

const layerBar = ['addVector', 'addRaster', 'addPostgis', 'addSpatialite', 'addMssql', 'addOracle', 'addWms', 'addWcs', 'addWfs', 'addCsv']

// text before the mnemonic, the mnemonic, the rest
const menu = [
  ['Про', 'е', 'кты'], ['', 'П', 'равка'], ['', 'В', 'ид'], ['С', 'л', 'ой'], ['', 'У', 'становки'], ['', 'М', 'одули'],
  ['Век', 'т', 'ор'], ['', 'Р', 'астр'], ['', 'Б', 'аза данных'], ['', 'И', 'нтернет'], ['', 'C', 'ADDigitize'],
  ['', 'C', 'adTools'], ['Анализ данных', '', ''], ['', 'С', 'правка'],
]

/* ---------- docks ---------- */

const DockTitle = ({ title }: { title: string }) => (
  <div className="flex h-[18px] items-center gap-px pr-1.5 pl-[3px]">
    <HDots />
    <h2 className="px-[11px] pt-px text-[10px]">{title}</h2>
    <HDots />
    <button aria-label="float" className="ml-0.5 grid size-3.5 place-items-center rounded-[3px] border border-[#8a8a8a] bg-[#f8f8f8]">
      <svg viewBox="0 0 10 10" className="size-[10px]"><path d="M3.500 1h5v5h-5zM1 4h5v5H1zM3 1.500h6M1 4.500h5" fill="#fff" stroke="#000" /></svg>
    </button>
    <button aria-label="close" className="grid size-3.5 place-items-center rounded-[3px] border border-[#8a8a8a] bg-[#f8f8f8]">
      <svg viewBox="0 0 10 10" className="size-[10px]"><path d="M1.500 1.500l7 7M8.500 1.500l-7 7" stroke="#000" strokeWidth="1.6" /></svg>
    </button>
  </div>
)

const DockBar = ({ items, className }: { items: string[]; className: string }) => (
  <div className={`flex items-start gap-[11px] pl-2 ${className}`}>
    {items.map((item) => (
      <button key={item} aria-label={item}>
        <Icon name={item} small />
      </button>
    ))}
  </div>
)

const Splitter = ({ className }: { className: string }) => (
  <div className={`flex items-center justify-center ${className}`}>
    <div className="h-[3px] w-[113px] bg-[radial-gradient(circle_at_1px_1px,#c2c2c2_1px,transparent_1px)] bg-[length:5px_3px]" />
  </div>
)

const Branch = ({ open = false, last = false }: { open?: boolean; last?: boolean }) => (
  <svg viewBox="0 0 18 16" className="h-4 w-[18px] shrink-0" aria-hidden="true">
    <path d={last ? 'M5.500 0v8' : 'M5.500 0v16'} stroke="#888" strokeDasharray="1 1" />
    <path d="M6 8.500h9" stroke="#888" strokeDasharray="1 1" />
    {open && <path d="M1.500 4.500h8v8h-8zM3.500 8.500h4M5.500 6.500v4" fill="#fff" stroke="#777" />}
  </svg>
)

const browserTree = [
  { label: 'Домашний каталог', icon: 'folder', open: true },
  { label: 'Избранное', icon: 'star' },
  { label: 'C:/', icon: 'folder', open: true },
  { label: 'E:/', icon: 'folder', open: true },
  { label: 'X:/', icon: 'folder', open: true },
  { label: 'MSSQL', icon: 'mssql' },
  { label: 'Oracle', icon: 'oracle' },
  { label: 'PostGIS', icon: 'postgis' },
  { label: 'SpatiaLite', icon: 'spatialite', open: true },
  { label: 'OWS', icon: 'ows', open: true },
  { label: 'WCS', icon: 'wcs' },
  { label: 'WFS', icon: 'wfs' },
  { label: 'WMS', icon: 'wms', open: true },
]

const Check = ({ id }: { id: string }) => (
  <span className="grid size-[13px] shrink-0 *:[grid-area:1/1]">
    <input id={id} type="checkbox" defaultChecked className="peer size-[13px] appearance-none border border-[#b0b0b0] bg-white" />
    <svg viewBox="0 0 13 13" className="pointer-events-none invisible size-[13px] peer-checked:visible" aria-hidden="true">
      <path d="M3 3l7 7M10 3l-7 7" stroke="#000" strokeWidth="3" />
    </svg>
  </span>
)

const Combo = ({ id, value, className, disabled = false }: { id: string; value: string; className: string; disabled?: boolean }) => (
  <div className={`relative h-5 shrink-0 overflow-hidden rounded-[3px] border border-[#a4a4a4] ${className}`}>
    <select
      id={id}
      disabled={disabled}
      className={disabled ? 'size-full appearance-none pl-1 leading-none text-[#8a8a8a]' : 'size-full appearance-none pl-1 leading-none'}
    >
      <option>{value}</option>
    </select>
    <span className="pointer-events-none absolute inset-y-0 right-0 grid w-4 place-items-center border-l border-[#a4a4a4] bg-[#ececec]">
      <Caret gray={disabled} />
    </span>
  </div>
)

const ScrollButton = ({ right = false }: { right?: boolean }) => (
  <button aria-label={right ? 'right' : 'left'} className="grid h-4 w-4 shrink-0 place-items-center rounded-xs border border-[#8a8a8a] bg-linear-to-b from-white to-[#e4e4e4]">
    <svg viewBox="0 0 5 8" className="h-2 w-[5px]"><path d={right ? 'M0 0v8l5-4z' : 'M5 0v8L0 4z'} /></svg>
  </button>
)

const points = [
  [826, 318], [1156, 298], [666, 436], [636, 563], [980, 551], [554, 613], [1188, 632],
  [882, 647], [759, 727], [784, 901], [1120, 891],
]

export default function App() {
  return (
    <div className="flex h-screen flex-col bg-[#efefef] font-['DejaVu_Sans_Condensed','DejaVu_Sans',sans-serif] text-[11px] leading-4 text-black">
      <nav className="flex h-[23px] shrink-0 items-center gap-3.5 border-b border-[#b4b4b4] pt-1 pl-[9px]">
        {menu.map(([before, key, after]) => (
          <button key={before + key + after} className="whitespace-nowrap">
            {before}
            <u className="underline-offset-2">{key}</u>
            {after}
          </button>
        ))}
      </nav>
      <div className="relative shrink-0">
        <Toolbar label="Файл" items={fileBar} className="h-[39px]" />
        <Toolbar label="Правка" items={editBar} className="h-[39px]" />
        <Toolbar label="Оцифровка" items={advancedBar} className="h-[38px]" />
        <div role="tooltip" className="absolute top-[72px] left-[1335px] w-[90px] border border-black bg-[#ffffdc] pl-px text-[11px] leading-[18px] whitespace-nowrap shadow-[2px_2px_2px_#00000080]">
          Панель модуля
        </div>
      </div>

      <div className="flex min-h-0 flex-1 pt-px">
        <div role="toolbar" aria-label="Слои" className="flex w-[51px] shrink-0 flex-col">
          <div className="flex h-[11px] items-center px-[5px] pt-2"><HDots /></div>
          {layerBar.map((item) => (
            <button key={item} aria-label={item} className="grid h-[34px] place-items-center">
              <Icon name={item} />
            </button>
          ))}
          <button aria-label="newVector" className="flex h-[34px] items-center gap-1.5 pl-2">
            <Icon name="newVector" />
            <Caret />
          </button>
          <div className="flex h-[13px] items-center px-[5px] pt-2"><HDots /></div>
          <button aria-label="topology" className="grid h-[34px] place-items-center"><Icon name="topology" /></button>
          <button aria-label="notes" className="grid h-[34px] place-items-center"><Icon name="notes" /></button>
        </div>

        <div className="flex w-[355px] shrink-0 border-l border-[#b0b0b0]">
          <div className="flex min-w-0 flex-1 flex-col">
            <DockTitle title="Browser Panel" />
            <DockBar items={['addItem', 'refresh', 'funnel', 'collapse', 'info']} className="h-[39px] pt-[9px]" />
            <ul className="mr-1.5 min-h-0 flex-[329] overflow-hidden rounded-sm border-2 border-[#bdbdbd] bg-white">
              {browserTree.map((node, i) => (
                <li key={node.label} className="flex h-4 items-center pl-1">
                  <Branch open={node.open} last={i === browserTree.length - 1} />
                  <Icon name={node.icon} small />
                  <span className="pt-0.5 pl-1.5">{node.label}</span>
                </li>
              ))}
            </ul>
            <div role="tablist" className="mr-1.5 flex h-[21px] items-start border-t border-[#bdbdbd]">
              <button role="tab" aria-selected="false" className="h-[17px] w-[110px] rounded-b-sm border-r border-b-2 border-l border-[#b4b4b4] bg-linear-to-b from-[#e8e8e8] to-[#f4f4f4] pt-px leading-none">
                Layer Order Panel
              </button>
              <button role="tab" aria-selected="true" className="h-[20px] w-[92px] rounded-b-sm border-r-2 border-b border-[#b4b4b4] pt-px">
                Browser Panel
              </button>
            </div>

            <Splitter className="h-1.5" />
            <DockTitle title="Layers Panel" />
            <DockBar items={['group', 'eye', 'funnel', 'expand', 'collapse', 'remove']} className="h-[39px] pt-[9px]" />
            <div className="mr-1.5 min-h-0 flex-[300] overflow-hidden rounded-sm border-2 border-[#bdbdbd] bg-white">
              <div className="flex h-4 items-center bg-[#efefef] pl-1">
                <Branch last />
                <Check id="layer" />
                <svg viewBox="0 0 8 8" className="mx-2.5 size-2"><circle cx="4" cy="4" r="3.2" fill="#7cb4e4" stroke="#4a739f" /></svg>
                <label htmlFor="layer" className="font-bold underline underline-offset-2">testtest</label>
              </div>
            </div>

            <Splitter className="h-[7px]" />
            <DockTitle title="Результат определения" />
            <DockBar items={['expand', 'collapse', 'expandNew', 'form', 'deselect', 'copy', 'print']} className="h-[33px] pt-2" />
            <div className="mr-1.5 flex min-h-0 flex-[378] flex-col rounded-sm border-2 border-[#bdbdbd] bg-white">
              <table className="w-full table-fixed border-collapse">
                <thead>
                  <tr className="h-[20px] bg-linear-to-b from-[#f8f8f8] to-[#e2e2e2] text-left">
                    <th className="border border-[#8a8a8a] px-[3px] font-normal">Объект</th>
                    <th className="w-[55px] overflow-hidden border border-r-0 border-l-2 border-[#8a8a8a] px-[2px] font-normal">Значение</th>
                  </tr>
                </thead>
              </table>
              <div className="mt-auto flex h-4 bg-[#f4f4f4]">
                <ScrollButton />
                <div className="grid w-[262px] place-items-center rounded-xs border border-[#8a8a8a] bg-linear-to-b from-white to-[#e0e0e0]">
                  <div className="h-[10px] w-[19px] bg-[radial-gradient(circle_at_1px_1px,#b4b4b4_1px,transparent_1px)] bg-[length:4px_4px]" />
                </div>
                <div className="flex-1 bg-[radial-gradient(circle_at_1px_1px,#e0e0e0_1px,transparent_1px)] bg-[length:3px_3px]" />
                <ScrollButton />
                <ScrollButton right />
              </div>
            </div>
            <div className="flex h-[30px] items-center pl-1">
              <label htmlFor="mode" className="w-[39px]">Режим</label>
              <Combo id="mode" value="Текущий слой" className="w-[177px] bg-linear-to-b from-[#fafafa] to-[#e4e4e4]" />
              <span className="flex items-center gap-1 pl-1.5">
                <Check id="openForm" />
                <label htmlFor="openForm" className="whitespace-nowrap">Открывать форму</label>
              </span>
            </div>
            <div className="mb-1 flex h-[29px] items-center pl-1">
              <label htmlFor="view" className="w-[26px] text-[#8a8a8a]">Вид</label>
              <Combo id="view" value="Дерево" disabled className="w-[72px]" />
              <button className="mr-[11px] ml-auto h-[22px] w-[59px] rounded-[3px] border border-[#8a8a8a] bg-linear-to-b from-white to-[#e8e8e8]">Справка</button>
            </div>
          </div>
          <div className="my-auto -ml-[5px] h-[418px] w-[5px] bg-[radial-gradient(circle_at_2px_1px,#c2c2c2_1px,transparent_1px)] bg-[length:5px_5px]" />
        </div>

        <main className="min-w-0 flex-1 rounded-xs border-2 border-[#bdbdbd] bg-white">
          <svg className="size-full" role="img" aria-label="testtest">
            {points.map(([x, y]) => (
              <circle key={x} cx={x} cy={y} r="3.7" fill="#a0cbe2" stroke="#24323c" strokeWidth="1.1" />
            ))}
          </svg>
        </main>
      </div>

      <footer className="flex h-[30px] shrink-0 items-center justify-end pt-0.5 pr-[15px]">
        <button aria-label="mouse" className="mr-2 grid h-6 w-5 place-items-center rounded-[3px] border border-[#8a8a8a] bg-[#f4f4f4]">
          <Icon name="mouse" small />
        </button>
        <label htmlFor="coords" className="w-[78px]">Координаты:</label>
        <input id="coords" defaultValue="-689,-795" className="h-5 w-[300px] rounded-[3px] border border-[#b0b0b0] bg-white px-1 text-center" />
        <label htmlFor="scale" className="w-[66px] pl-2">Масштаб</label>
        <Combo id="scale" value="1:5 769" className="w-[87px] bg-white" />
        <label htmlFor="rotation" className="w-[73px] pl-2">Вращение:</label>
        <div className="flex h-6 w-[98px] overflow-hidden rounded-[3px] border border-[#a4a4a4] bg-white">
          <input id="rotation" defaultValue="0,0" className="min-w-0 flex-1 px-[3px]" />
          <div className="flex w-4 flex-col divide-y divide-[#a4a4a4] border-l border-[#a4a4a4] bg-[#ececec]">
            <button aria-label="up" className="grid flex-1 place-items-center"><svg viewBox="0 0 7 4" className="h-1 w-[7px]"><path d="M0 4h7L3.500 0z" /></svg></button>
            <button aria-label="down" className="grid flex-1 place-items-center"><svg viewBox="0 0 7 4" className="h-1 w-[7px]"><path d="M0 0h7L3.500 4z" /></svg></button>
          </div>
        </div>
        <span className="flex w-[97px] items-center gap-1 pl-1.5">
          <Check id="render" />
          <label htmlFor="render">Отрисовка</label>
        </span>
        <button className="flex w-[95px] items-center gap-[3px]">
          <Icon name="crs" small />
          EPSG:3857
        </button>
        <button aria-label="log"><Icon name="log" small /></button>
      </footer>
    </div>
  )
}
